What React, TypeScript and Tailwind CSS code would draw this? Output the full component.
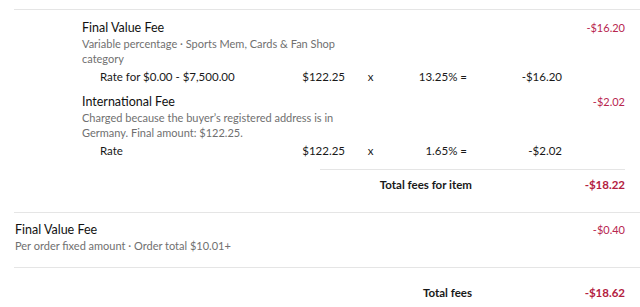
import React from 'react';

type RateRow = {
  label: string;
  amount: string;
  percent: string;
  result: string;
};

function RateLine({ row }: { row: RateRow }) {
  return (
    <div className="grid grid-cols-[190px_55px_51px_71px_95px] items-center pl-[18px] text-[11.5px] leading-[18px] text-[#191919]">
      <span>{row.label}</span>
      <span className="text-right">{row.amount}</span>
      <span className="text-center">x</span>
      <span className="text-right">{row.percent}</span>
      <span className="text-right">{row.result}</span>
    </div>
  );
}

function FeeHeader({ title, amount }: { title: string; amount: string }) {
  return (
    <div className="flex items-center justify-between leading-[16px]">
      <span className="text-[12.5px] text-[#111111]">{title}</span>
      <span className="text-[11px] text-[#b8264f]">{amount}</span>
    </div>
  );
}

export default function App() {
  return (
    <div className="w-[640px] h-[307px] bg-white pt-[9px] pl-[14px] font-['Lato',sans-serif] overflow-hidden">
      {/* Item fees */}
      <div className="border-t border-[#e5e5e5] pt-[10px] pl-[68px] pr-[15px]">
        <FeeHeader title="Final Value Fee" amount="-$16.20" />
        <p className="text-[11px] leading-[15px] text-[#707070] w-[256px]">
          Variable percentage · Sports Mem, Cards &amp; Fan Shop category
        </p>
        <div className="mt-[2px]">
          <RateLine row={{ label: 'Rate for $0.00 - $7,500.00', amount: '$122.25', percent: '13.25% =', result: '-$16.20' }} />
        </div>

        <div className="mt-[8px]">
          <FeeHeader title="International Fee" amount="-$2.02" />
        </div>
        <p className="text-[11px] leading-[15px] text-[#707070] w-[256px]">
          Charged because the buyer’s registered address is in Germany. Final amount: $122.25.
        </p>
        <div className="mt-[2px]">
          <RateLine row={{ label: 'Rate', amount: '$122.25', percent: '1.65% =', result: '-$2.02' }} />
        </div>

        <div className="mt-[9px] ml-[238px] border-t border-[#e5e5e5] pt-[6px] pb-[18px] flex items-center text-[11.5px] leading-[18px] font-bold">
          <span className="w-[152px] text-right text-[#191919]">Total fees for item</span>
          <span className="flex-1 text-right text-[#b3213f]">-$18.22</span>
        </div>
      </div>

      {/* Order fees */}
      <div className="border-t border-[#e5e5e5] pt-[9px] pb-[14px] pl-[1px] pr-[15px]">
        <FeeHeader title="Final Value Fee" amount="-$0.40" />
        <p className="text-[11px] leading-[15px] text-[#707070]">
          Per order fixed amount · Order total $10.01+
        </p>
      </div>

      <div className="border-t border-[#e5e5e5] pt-[16px] pr-[15px] flex items-center text-[11.5px] leading-[18px] font-bold">
        <span className="w-[458px] text-right text-[#191919]">Total fees</span>
        <span className="flex-1 text-right text-[#b3213f]">-$18.62</span>
      </div>
    </div>
  );
}
